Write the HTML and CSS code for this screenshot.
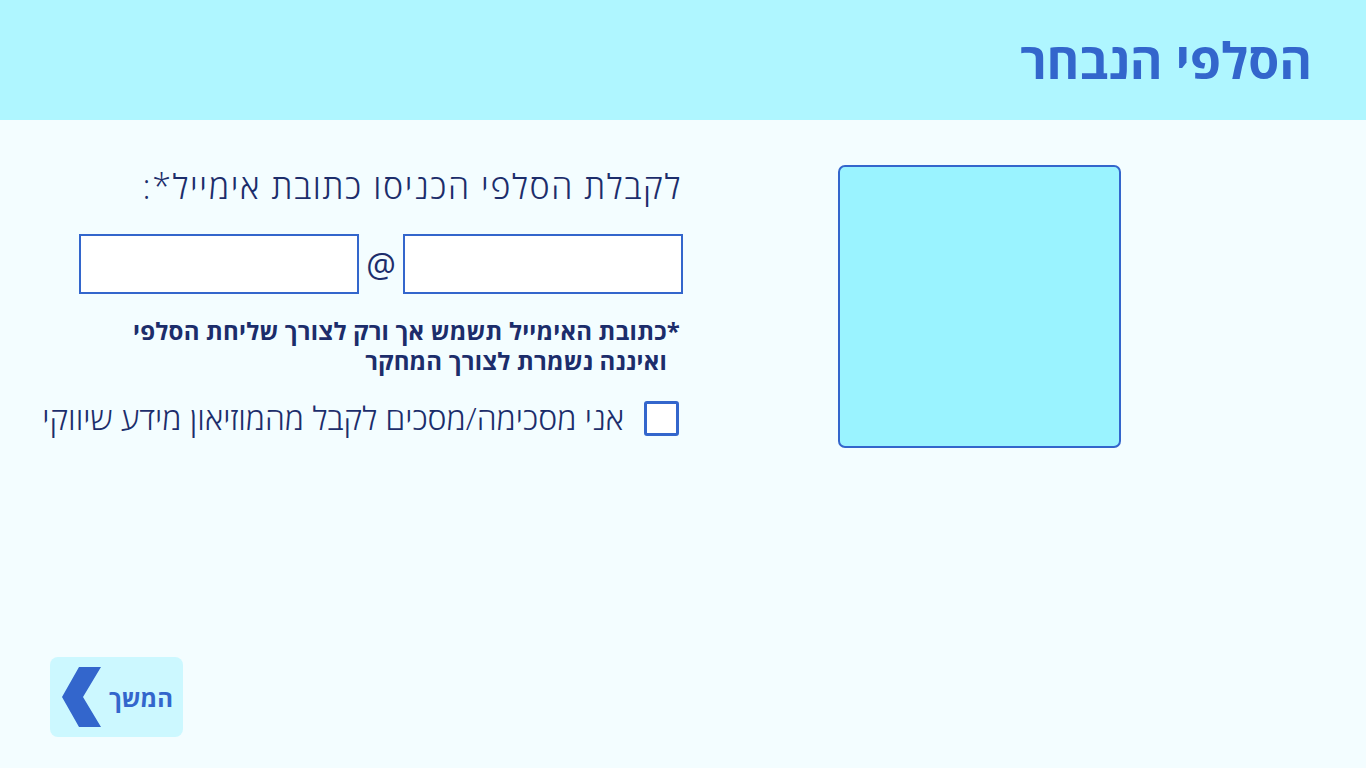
FILE: index.html
```html
<!DOCTYPE html>
<html lang="he" dir="rtl">
<head>
<meta charset="utf-8">
<link rel="stylesheet" href="styles.css">
</head>
<body>
<header class="topbar">
  <h1 class="title">הסלפי הנבחר</h1>
</header>
<main class="content">
  <div class="photo"></div>
  <section class="form">
    <p class="prompt">לקבלת הסלפי הכניסו כתובת אימייל*:</p>
    <div class="email-row">
      <input class="field" type="text">
      <span class="at">@</span>
      <input class="field" type="text">
    </div>
    <p class="note">*כתובת האימייל תשמש אך ורק לצורך שליחת הסלפי<br><span class="indent">ואיננה נשמרת לצורך המחקר</span></p>
    <label class="consent">
      <span class="box"></span>
      <span class="consent-text">אני מסכימה/מסכים לקבל מהמוזיאון מידע שיווקי</span>
    </label>
  </section>
</main>
<footer class="footer">
  <button class="next">
    <span class="next-text">המשך</span>
    <svg class="chev" width="39" height="60" viewBox="0 0 39 60"><polygon points="17,0 39,0 21,30 39,60 17,60 0,30" fill="#3366cc"/></svg>
  </button>
</footer>
</body>
</html>
```
FILE: styles.css
```css
html, body {
  margin: 0;
  padding: 0;
  height: 100%;
}
body {
  background: #f3fdff;
  font-family: "Open Sans", "DejaVu Sans", sans-serif;
  display: flex;
  flex-direction: column;
  width: 1366px;
  height: 768px;
  overflow: hidden;
}
.topbar {
  height: 120px;
  background: #aff6ff;
  display: flex;
  align-items: center;
  padding-right: 54px;
  box-sizing: border-box;
  flex: none;
}
.title {
  margin: 0;
  font-size: 50px;
  font-weight: 700;
  color: #3366cc;
  line-height: 1;
}
.content {
  flex: 1;
  display: flex;
  align-items: flex-start;
  padding-top: 45px;
  padding-right: 245px;
  gap: 155px;
}
.photo {
  width: 283px;
  height: 283px;
  box-sizing: border-box;
  background: #9af3ff;
  border: 2px solid #3366cc;
  border-radius: 7px;
  flex: none;
}
.form {
  display: flex;
  flex-direction: column;
  align-items: flex-start;
  color: #1c2d6b;
  margin-top: -1px;
}
.prompt {
  margin: 0 1px 0 0;
  font-size: 34px;
  font-weight: 300;
  letter-spacing: 1.6px;
  line-height: 44px;
}
.email-row {
  display: flex;
  align-items: center;
  margin-top: 26px;
}
.field {
  width: 280px;
  height: 60px;
  box-sizing: border-box;
  border: 2px solid #3366cc;
  background: #ffffff;
  margin: 0;
  border-radius: 0;
}
.at {
  width: 44px;
  text-align: center;
  font-size: 33px;
  font-weight: 400;
  color: #1c2d6b;
}
.note {
  margin: 22px 3px 0 0;
  font-size: 24px;
  font-weight: 700;
  letter-spacing: 0.2px;
  line-height: 30px;
}
.indent {
  padding-right: 13px;
}
.consent {
  display: flex;
  align-items: center;
  gap: 20px;
  margin: 24px 4px 0 0;
}
.box {
  width: 35px;
  height: 35px;
  box-sizing: border-box;
  border: 3px solid #3366cc;
  border-radius: 3px;
  background: #ffffff;
  flex: none;
}
.consent-text {
  font-size: 32px;
  font-weight: 300;
  line-height: 36px;
}
.footer {
  display: flex;
  padding: 0 0 31px 0;
  direction: ltr;
  flex: none;
}
.next {
  width: 133px;
  height: 80px;
  background: #ccf8ff;
  border: none;
  border-radius: 8px;
  display: flex;
  flex-direction: row-reverse;
  align-items: center;
  justify-content: flex-end;
  gap: 8px;
  padding: 0 10px 0 12px;
  font-family: inherit;
  margin-left: 50px;
}
.chev {
  flex: none;
}
.next-text {
  font-size: 24px;
  font-weight: 700;
  color: #3366cc;
}
```
